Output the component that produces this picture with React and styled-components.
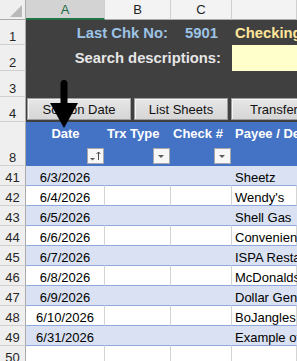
import React from 'react';
import styled, { createGlobalStyle } from 'styled-components';

const Global = createGlobalStyle`
  html, body { margin: 0; padding: 0; background: #ffffff; overflow: hidden; }
  body { width: 297px; height: 361px; font-family: "Liberation Sans", Arial, sans-serif; }
  * { box-sizing: border-box; }
`;

const COLS = '26px 79px 66px 61px minmax(0, 1fr)';

const Sheet = styled.div`
  position: relative;
  width: 297px;
  height: 361px;
  overflow: hidden;
  display: flex;
  flex-direction: column;
`;

const Row = styled.div`
  display: grid;
  grid-template-columns: ${COLS};
  height: ${p => p.$h}px;
  flex: none;
`;

const Corner = styled.div`
  position: relative;
  background: #efefef;
  border-right: 1px solid #ababab;
  border-bottom: 1px solid #ababab;
  &::after {
    content: '';
    position: absolute;
    right: 3px;
    bottom: 2px;
    width: 0;
    height: 0;
    border-left: 12px solid transparent;
    border-bottom: 12px solid #b9b9b9;
  }
`;

const ColHead = styled.div`
  display: flex;
  align-items: center;
  justify-content: center;
  font-size: 13px;
  background: ${p => (p.$sel ? '#d3d3d3' : '#f3f3f3')};
  color: ${p => (p.$sel ? '#1d6b40' : '#222222')};
  border-right: 1px solid #d0d0d0;
  border-bottom: ${p => (p.$sel ? '2px solid #217346' : '1px solid #ababab')};
`;

const RowNum = styled.div`
  display: flex;
  align-items: flex-end;
  justify-content: center;
  font-size: 13px;
  line-height: 15px;
  color: #262626;
  background: #efefef;
  border-right: 1px solid #ababab;
  border-bottom: 1px solid #d0d0d0;
`;

const DarkCell = styled.div`
  grid-column: span ${p => p.$span || 1};
  display: flex;
  align-items: center;
  justify-content: ${p => p.$justify || 'flex-start'};
  padding: ${p => p.$pad || '0'};
  background: ${p => p.$bg || '#404040'};
  color: ${p => p.$color || '#e7e6e6'};
  font-weight: bold;
  font-size: 14.8px;
  white-space: nowrap;
  overflow: visible;
`;

const ButtonBar = styled.div`
  grid-column: 2 / -1;
  display: flex;
  gap: 3px;
  padding: 1px 0 0 1px;
  background: #404040;
  white-space: nowrap;
`;

const SheetButton = styled.div`
  flex: none;
  width: ${p => p.$w}px;
  height: 22px;
  display: flex;
  align-items: center;
  justify-content: center;
  font-size: 13px;
  color: #111111;
  background: linear-gradient(#e6e6e6, #d6d6d6);
  border: 1px solid #9e9e9e;
  box-shadow: inset 1px 1px 0 #f4f4f4;
`;

const HeadCell = styled.div`
  display: flex;
  flex-direction: column;
  justify-content: space-between;
  align-items: ${p => (p.$center ? 'center' : 'flex-start')};
  padding: 4px 0 2px ${p => p.$padL || 0}px;
  background: #4472c4;
  color: #ffffff;
  font-weight: bold;
  font-size: 13px;
  line-height: 15px;
  white-space: nowrap;
`;

const FilterBtn = styled.div`
  align-self: flex-end;
  margin-right: 1px;
  width: 17px;
  height: 16px;
  background: #f7f7f7;
  border: 1px solid #a8a8a8;
  display: flex;
  align-items: center;
  justify-content: center;
`;

const DataCell = styled.div`
  display: flex;
  align-items: flex-end;
  justify-content: ${p => (p.$center ? 'center' : 'flex-start')};
  padding-left: ${p => p.$padL || 0}px;
  font-size: 13px;
  line-height: 15px;
  color: #000000;
  white-space: nowrap;
  background: ${p => (p.$band ? '#d9e1f2' : '#ffffff')};
  border-bottom: 1px solid ${p => (p.$plain ? '#d4d4d4' : '#8ea9db')};
  border-right: 1px solid ${p => (p.$band ? '#d9e1f2' : '#d4d4d4')};
`;

const Arrow = styled.svg`
  position: absolute;
  left: 48px;
  top: 78px;
  width: 32px;
  height: 52px;
  pointer-events: none;
`;

const FilterIcon = () => (
  <svg width="15" height="14" viewBox="0 0 15 14">
    <polygon points="4,6 10,6 7,9" fill="#5a5a5a" />
  </svg>
);

const SortIcon = () => (
  <svg width="15" height="14" viewBox="0 0 15 14">
    <polygon points="2,9 7,9 4.5,11.5" fill="#5a5a5a" />
    <line x1="10.5" y1="3" x2="10.5" y2="11" stroke="#4a4a4a" strokeWidth="1" />
    <polyline points="8.5,5 10.5,3 12.5,5" fill="none" stroke="#4a4a4a" strokeWidth="1" />
  </svg>
);

const rows = [
  { n: 41, date: '6/3/2026', payee: 'Sheetz' },
  { n: 42, date: '6/4/2026', payee: "Wendy's" },
  { n: 43, date: '6/5/2026', payee: 'Shell Gas' },
  { n: 44, date: '6/6/2026', payee: 'Convenience Store' },
  { n: 45, date: '6/7/2026', payee: 'ISPA Restaurant' },
  { n: 46, date: '6/8/2026', payee: 'McDonalds' },
  { n: 47, date: '6/9/2026', payee: 'Dollar General' },
  { n: 48, date: '6/10/2026', payee: 'BoJangles' },
  { n: 49, date: '6/31/2026', payee: 'Example of bad date' },
];

export default function App() {
  return (
    <>
      <Global />
      <Sheet>
        <Row $h={20}>
          <Corner />
          <ColHead $sel>A</ColHead>
          <ColHead>B</ColHead>
          <ColHead>C</ColHead>
          <ColHead />
        </Row>

        <Row $h={25}>
          <RowNum>1</RowNum>
          <DarkCell $span={2} $justify="flex-end" $pad="0 3px 0 0" $color="#9dc3e6">Last Chk No:</DarkCell>
          <DarkCell $justify="center" $color="#9dc3e6">5901</DarkCell>
          <DarkCell $pad="0 0 0 3px" $color="#ffe699">Checking Account</DarkCell>
        </Row>

        <Row $h={26}>
          <RowNum>2</RowNum>
          <DarkCell $span={3} $justify="flex-end" $pad="0 11px 0 0" $color="#e7e6e6">Search descriptions:</DarkCell>
          <DarkCell $bg="#ffffcc" />
        </Row>

        <Row $h={26}>
          <RowNum>3</RowNum>
          <DarkCell $span={4} />
        </Row>

        <Row $h={25}>
          <RowNum>4</RowNum>
          <ButtonBar>
            <SheetButton $w={104}>Sort on Date</SheetButton>
            <SheetButton $w={94}>List Sheets</SheetButton>
            <SheetButton $w={86}>Transfer</SheetButton>
          </ButtonBar>
        </Row>

        <Row $h={44}>
          <RowNum>8</RowNum>
          <HeadCell $center>
            <span>Date</span>
            <FilterBtn><SortIcon /></FilterBtn>
          </HeadCell>
          <HeadCell $padL={2}>
            <span>Trx Type</span>
            <FilterBtn><FilterIcon /></FilterBtn>
          </HeadCell>
          <HeadCell $padL={2}>
            <span>Check #</span>
            <FilterBtn><FilterIcon /></FilterBtn>
          </HeadCell>
          <HeadCell $padL={3}>
            <span>Payee / Description</span>
          </HeadCell>
        </Row>

        {rows.map((r, i) => {
          const band = i % 2 === 0;
          return (
            <Row $h={20} key={r.n}>
              <RowNum>{r.n}</RowNum>
              <DataCell $band={band} $center>{r.date}</DataCell>
              <DataCell $band={band} />
              <DataCell $band={band} />
              <DataCell $band={band} $padL={3}>{r.payee}</DataCell>
            </Row>
          );
        })}

        <Row $h={20}>
          <RowNum>50</RowNum>
          <DataCell $plain />
          <DataCell $plain />
          <DataCell $plain />
          <DataCell $plain />
        </Row>

        <Arrow viewBox="0 0 32 52">
          <path d="M12.5 25 V5.5 a3.5 3.5 0 0 1 7 0 V25 Z" fill="#000" />
          <polygon points="2,25 30,25 16,50" fill="#000" />
        </Arrow>
      </Sheet>
    </>
  );
}
